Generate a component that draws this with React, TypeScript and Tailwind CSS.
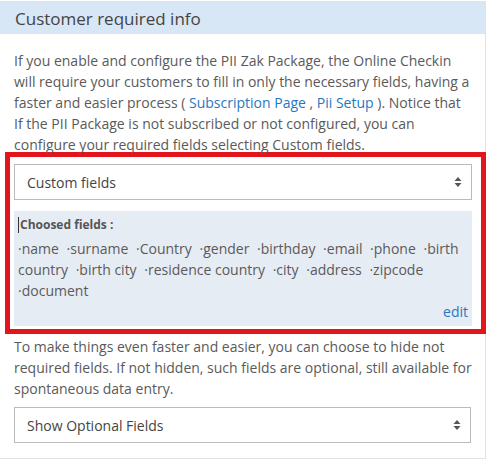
import { useState } from 'react';

const fields = [
  'name',
  'surname',
  'Country',
  'gender',
  'birthday',
  'email',
  'phone',
  'birth country',
  'birth city',
  'residence country',
  'city',
  'address',
  'zipcode',
  'document',
];

function SelectArrows() {
  return (
    <svg width="8" height="12" viewBox="0 0 8 12" className="pointer-events-none absolute right-[10px] top-1/2 -translate-y-1/2">
      <path d="M4 1 L7.5 5 L0.5 5 Z" fill="#555" />
      <path d="M4 11 L7.5 7 L0.5 7 Z" fill="#555" />
    </svg>
  );
}

function PlainSelect({ value, options, onChange }: { value: string; options: string[]; onChange: (v: string) => void }) {
  return (
    <div className="relative">
      <select
        value={value}
        onChange={e => onChange(e.target.value)}
        className="h-[36px] w-full appearance-none border border-[#bbbbbb] bg-white pl-[12px] pr-8 text-[14px] text-[#444] outline-none"
      >
        {options.map(o => (
          <option key={o}>{o}</option>
        ))}
      </select>
      <SelectArrows />
    </div>
  );
}

export default function App() {
  const [mode, setMode] = useState('Custom fields');
  const [optional, setOptional] = useState('Show Optional Fields');

  return (
    <div className="h-[472px] w-[499px] bg-white pt-[1px] font-['Open_Sans',sans-serif] text-[14px] leading-[21px] text-[#5a5a5a]">
      <div className="ml-[-1px] w-[487px] border border-[#e2e2e2]">
        {/* intestazione */}
        <div className="flex h-[32px] items-center bg-[#d8e7f5] pl-[15px] text-[17px] text-[#444]">
          Customer required info
        </div>

        <div className="px-[14px] pb-[15px] pt-[16px]">
          <p className="-mr-[4px]">
            If you enable and configure the PII Zak Package, the Online Checkin will require your customers to fill
            in only the necessary fields, having a faster and easier process ({' '}
            <a className="text-[#1f78c1]">Subscription Page</a> , <a className="text-[#1f78c1]">Pii Setup</a> ). Notice
            that
            <br />
            If the PII Package is not subscribed or not configured, you can configure your required fields selecting
            Custom fields.
          </p>

          {/* riquadro evidenziato */}
          <div className="-mr-[15px] -ml-[9px] mt-[-3px] border-[5px] border-[#e2141c] pb-[3px] pl-[4px] pr-[9px] pt-[7px]">
            <PlainSelect value={mode} options={['Custom fields', 'PII Package']} onChange={setMode} />
            <div className="mt-[11px] bg-[#e6ecf4] px-[4px] pb-[4px] pt-[5px]">
              <div className="flex items-center text-[12px] font-bold leading-[18px] text-[#555]">
                <span className="mr-[1px] inline-block h-[16px] w-[1px] bg-[#333]" />
                Choosed fields :
              </div>
              <div className="mt-[4px]">
                {fields.map(f => (
                  <span key={f}>
                    <span className="mr-[4px]">·{f}</span>{' '}
                  </span>
                ))}
              </div>
              <div className="text-right">
                <a className="text-[#1f78c1]">edit</a>
              </div>
            </div>
          </div>

          <p className="-mr-[4px] mt-[2px]">
            To make things even faster and easier, you can choose to hide not required fields. If not hidden, such
            fields are optional, still available for spontaneous data entry.
          </p>

          <div className="mt-[8px]">
            <PlainSelect
              value={optional}
              options={['Show Optional Fields', 'Hide Optional Fields']}
              onChange={setOptional}
            />
          </div>
        </div>
      </div>
    </div>
  );
}
